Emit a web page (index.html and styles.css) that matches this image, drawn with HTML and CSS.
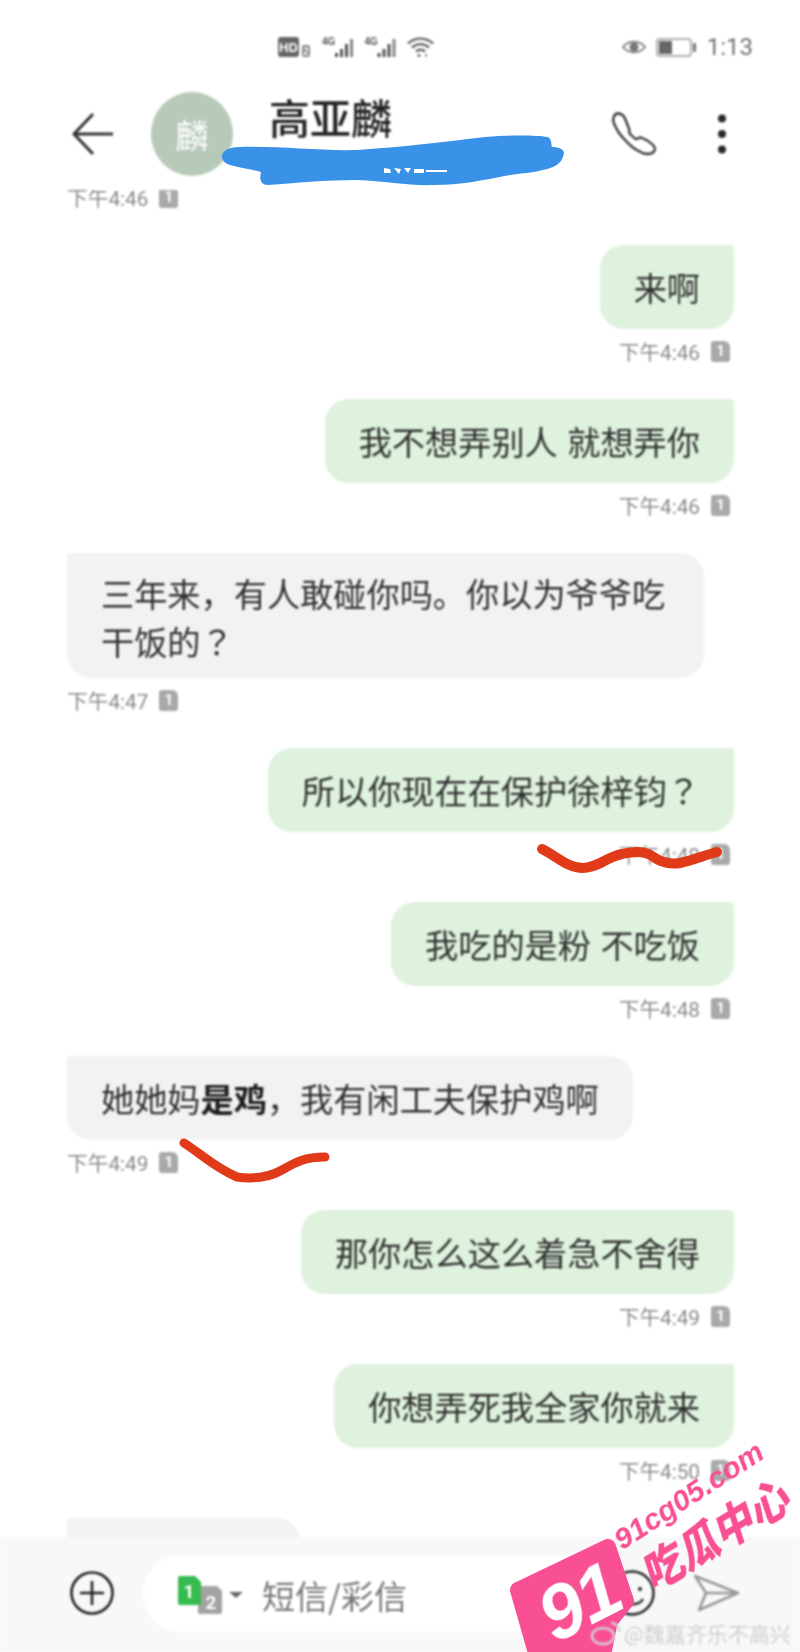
FILE: index.html
```html
<!DOCTYPE html>
<html lang="zh-CN">
<head>
<meta charset="utf-8">
<title>高亚麟</title>
<link rel="stylesheet" href="styles.css">
</head>
<body>
<div class="screen">
  <div class="app">
    <div class="status">
      <div class="status-left">
        <svg class="s-hd" width="32" height="21" viewBox="0 0 32 21"><rect x="0" y="0" width="21" height="20" rx="3" fill="#666"/><text x="10.5" y="15" class="st-hd">HD</text><rect x="24" y="8" width="8" height="12" rx="2" fill="#888"/><text x="28" y="18" class="st-2">2</text></svg>
        <svg width="33" height="22" viewBox="0 0 33 22"><text x="0" y="9" class="st-4g">4G</text><rect x="13" y="17" width="3" height="4" fill="#555"/><rect x="18" y="13" width="3" height="8" fill="#555"/><rect x="23" y="8" width="3" height="13" fill="#555"/><rect x="28" y="3" width="3" height="18" fill="#888"/></svg>
        <svg width="34" height="22" viewBox="0 0 33 22"><text x="0" y="9" class="st-4g">4G</text><rect x="13" y="17" width="3" height="4" fill="#555"/><rect x="18" y="13" width="3" height="8" fill="#555"/><rect x="23" y="8" width="3" height="13" fill="#555"/><rect x="28" y="3" width="3" height="18" fill="#888"/></svg>
        <svg width="27" height="22" viewBox="0 0 27 22" fill="none" stroke="#666" stroke-width="2.4"><path d="M1 7.5C8 1 19 1 26 7.5"/><path d="M5 11.5C10 7 17 7 22 11.5"/><path d="M9 15.5C11.5 13.2 15.5 13.2 18 15.5"/><circle cx="12" cy="19.5" r="1.5" fill="#666" stroke="none"/><circle cx="19" cy="19.5" r="1.2" fill="#888" stroke="none"/></svg>
      </div>
      <div class="status-right">
        <svg width="24" height="16" viewBox="0 0 24 16"><path d="M1 8C6 1 18 1 23 8C18 15 6 15 1 8Z" fill="none" stroke="#888" stroke-width="2"/><circle cx="12" cy="8" r="4.5" fill="#777"/></svg>
        <svg width="41" height="19" viewBox="0 0 41 19"><rect x="1" y="1" width="34" height="17" rx="3" fill="#fff" stroke="#b0b0b0" stroke-width="2"/><rect x="3" y="3" width="13" height="13" fill="#666"/><rect x="37" y="5" width="3" height="9" rx="1" fill="#777"/></svg>
        <span class="clock">1:13</span>
      </div>
    </div>
    <div class="header">
      <svg class="back" width="42" height="44" viewBox="0 0 42 44" fill="none" stroke="#333" stroke-width="3"><path d="M42 22H3M22 2L3 22L22 42"/></svg>
      <div class="avatar">麟</div>
      <div class="name">高亚麟</div>
      <svg class="phone" width="44" height="44" viewBox="0 0 44 44" fill="none" stroke="#333" stroke-width="2.3" stroke-linejoin="round"><path d="M6 1.5C9 1.5 11 3 12.5 5.5C14 9 15.5 13 17 16.5C17.5 19 16.5 21 18.5 22.5L23.5 27C25.5 27.5 27 25 29 25.5C33 27 38 30 41 33C43.5 35.5 43.5 38.5 41 40.5C38 42.5 33 42.5 29.5 40.5C24 38 18.5 34 14.5 29.5C10 25 6 20.5 4 15.5C2 12 0.5 8.5 1.5 6C2 3.5 3.5 1.5 6 1.5Z"/></svg>
      <svg class="more" width="10" height="40" viewBox="0 0 10 40" fill="#2a2a2a"><circle cx="5" cy="4.5" r="4"/><circle cx="5" cy="20" r="4"/><circle cx="5" cy="35.5" r="4"/></svg>
    </div>
    <div class="list">
      <div class="msg recv first"><div class="meta"><span>下午4:46</span><span class="sim">1</span></div></div>
      <div class="msg sent"><div class="bubble">来啊</div><div class="meta"><span>下午4:46</span><span class="sim">1</span></div></div>
      <div class="msg sent"><div class="bubble">我不想弄别人 就想弄你</div><div class="meta"><span>下午4:46</span><span class="sim">1</span></div></div>
      <div class="msg recv"><div class="bubble two-line">三年来，有人敢碰你吗。你以为爷爷吃干饭的<span class="q" lang="zh-Hant">？</span></div><div class="meta"><span>下午4:47</span><span class="sim">1</span></div></div>
      <div class="msg sent"><div class="bubble">所以你现在在保护徐梓钧<span class="q" lang="zh-Hant">？</span></div><div class="meta"><span>下午4:48</span><span class="sim">1</span></div></div>
      <div class="msg sent"><div class="bubble">我吃的是粉 不吃饭</div><div class="meta"><span>下午4:48</span><span class="sim">1</span></div></div>
      <div class="msg recv"><div class="bubble">她她妈<b class="strong">是鸡</b>，我有闲工夫保护鸡啊</div><div class="meta"><span>下午4:49</span><span class="sim">1</span></div></div>
      <div class="msg sent"><div class="bubble">那你怎么这么着急不舍得</div><div class="meta"><span>下午4:49</span><span class="sim">1</span></div></div>
      <div class="msg sent"><div class="bubble">你想弄死我全家你就来</div><div class="meta"><span>下午4:50</span><span class="sim">1</span></div></div>
      <div class="msg recv"><div class="bubble cut"></div></div>
    </div>
    <div class="composer">
      <svg width="44" height="44" viewBox="0 0 44 44" fill="none" stroke="#222" stroke-width="2.6"><circle cx="22" cy="22" r="20.5"/><path d="M22 10V34M10 22H34"/></svg>
      <div class="pill">
        <div class="simpick">
          <svg width="44" height="38" viewBox="0 0 44 38"><path d="M22 10h17l5 5v21a2 2 0 0 1-2 2H22a2 2 0 0 1-2-2V12a2 2 0 0 1 2-2Z" fill="#a3a3a3"/><path d="M2 0h15l6 6v21a2 2 0 0 1-2 2H2a2 2 0 0 1-2-2V2a2 2 0 0 1 2-2Z" fill="#35bb4f"/><text x="11" y="22" class="sim-1">1</text><text x="33" y="33" class="sim-2">2</text></svg>
          <span class="caret"></span>
        </div>
        <span class="placeholder">短信/彩信</span>
      </div>
      <svg class="smile" width="46" height="46" viewBox="0 0 46 46" fill="none" stroke="#222" stroke-width="2.4"><circle cx="23" cy="23" r="21.5"/><circle cx="15" cy="19" r="2" fill="#222" stroke="none"/><circle cx="31" cy="19" r="2" fill="#222" stroke="none"/><path d="M12 29C16 36 30 36 34 29"/></svg>
      <svg class="send" width="46" height="38" viewBox="0 0 46 38" fill="none" stroke="#999" stroke-width="2.6" stroke-linejoin="round"><path d="M1 2L44 19L5 36L12 19L1 2ZM12 19H44"/></svg>
    </div>
  </div>

  <svg class="scribbles" width="800" height="1652" viewBox="0 0 800 1652" fill="none">
    <path fill="#3a92e8" d="M222 155C224 149 232 147 240 147C280 146 320 151 357 150C400 147 445 142 485 137C510 135 535 135 548 137C552 139 551 145 552 147C558 147 564 149 564 153C563 159 560 164 553 167C540 172 525 173 510 175C485 180 460 185 434 185C410 186 385 181 357 180C325 180 295 183 268 185C261 185 259 180 261 172C250 169 240 168 230 165C224 163 221 159 222 155Z"/>
    <path fill="#fff" d="M384 168L390 169L391 173L384 173ZM394 168L401 169L399 174ZM404 168H411L408 173ZM414 169H424V173H414ZM426 170H447V172H426Z"/>
    <path stroke="#e03a18" stroke-width="10" stroke-linecap="round" d="M542 849C556 856 568 868 583 868C598 868 606 857 622 854C634 851 645 851 652 856C660 862 668 865 680 863C694 860 705 855 717 852"/>
    <path stroke="#e03a18" stroke-width="9" stroke-linecap="round" d="M184 1143C200 1153 215 1168 237 1177C252 1179 268 1178 282 1170C296 1162 305 1157 325 1157"/>
  </svg>

  <svg class="badge" width="300" height="212" viewBox="0 0 300 212">
    <path fill="#f94f93" stroke="#f94f93" stroke-width="16" stroke-linejoin="round" d="M18 150L108 107L126 161L110 181L102 220H38Z"/>
  </svg>
  <div class="wm-num">91</div>
  <div class="wm-url">91cg05.com</div>
  <div class="wm-title">吃瓜中心</div>
  <div class="weibo"><svg width="32" height="26" viewBox="0 0 32 26" fill="none" stroke="#d2d2d2" stroke-width="2.4"><ellipse cx="13" cy="16" rx="11" ry="8"/><path d="M21 3C26 3 30 7 29 12"/></svg><span>@魏嘉齐乐不高兴</span></div>
</div>
</body>
</html>
```

FILE: styles.css
```css
* { box-sizing: border-box; }
html, body { margin: 0; padding: 0; background: #fff; }
body { font-family: "Noto Sans CJK SC", "Noto Sans", sans-serif; }
.screen { position: relative; width: 800px; height: 1652px; overflow: hidden; background: #fff; }
.app { width: 800px; height: 1652px; display: flex; flex-direction: column; filter: blur(0.9px); background: #fff; }

.status { height: 70px; flex: none; display: flex; align-items: center; justify-content: space-between; padding: 24px 47px 0 278px; }
.status-left { display: flex; align-items: center; gap: 9px; }
.s-hd { margin-right: 3px; }
.status-right { display: flex; align-items: center; gap: 10px; }
.clock { font-family: "Roboto", sans-serif; font-size: 24px; color: #707070; line-height: 26px; }
.st-hd { font: bold 13px "Liberation Sans", sans-serif; fill: #fff; text-anchor: middle; }
.st-2 { font: bold 10px "Liberation Sans", sans-serif; fill: #fff; text-anchor: middle; }
.st-4g { font: bold 10px "Liberation Sans", sans-serif; fill: #555; }

.header { height: 120px; flex: none; display: flex; align-items: center; padding: 8px 73px 0 71px; }
.back { flex: none; margin-right: 38px; }
.avatar { width: 82px; height: 84px; flex: none; border-radius: 50%; background: #b7cab9; color: #fff; font-size: 33px; display: flex; align-items: center; justify-content: center; margin-right: 36px; }
.name { align-self: flex-start; margin-top: 13px; font-size: 41px; font-weight: 500; line-height: 50px; color: #222; }
.phone { flex: none; margin-left: auto; margin-right: 61px; }
.more { flex: none; }

.list { flex: 1; min-height: 0; overflow: hidden; padding: 0 66px 0 67px; }
.msg { display: flex; flex-direction: column; margin-bottom: 36px; }
.msg.first { margin-top: -5px; }
.sent { align-items: flex-end; }
.recv { align-items: flex-start; }
.bubble { max-width: 637px; padding: 18px 34px; font-size: 33.2px; line-height: 48px; color: #303030; word-spacing: 2px; }
.sent .bubble { background: #def2dd; border-radius: 24px 4px 24px 24px; }
.recv .bubble { background: #f2f2f3; border-radius: 4px 24px 24px 24px; }
.bubble.two-line { padding-top: 16px; padding-bottom: 13px; }
.q { font-family: "Noto Sans CJK TC", sans-serif; }
.strong { font-weight: 700; color: #1c1c1c; }
.bubble.cut { width: 233px; height: 84px; }
.meta { display: flex; align-items: center; gap: 11px; height: 24px; margin-top: 10px; font-family: "Roboto", "Noto Sans CJK SC", sans-serif; font-size: 20.7px; color: #8a8a8a; }
.sent .meta { margin-right: 4px; }
.recv .meta { margin-left: 0; }
.first .meta { margin-top: 0; }
.sim { width: 19px; height: 21px; border-radius: 3px 6px 3px 3px; background: #a9a9a9; color: #fff; font-size: 15px; font-weight: 700; line-height: 21px; text-align: center; }

.composer { height: 115px; flex: none; display: flex; align-items: flex-start; padding: 18px 60px 0 70px; background: #f8f8f8; }
.composer > svg { margin-top: 16px; flex: none; }
.pill { width: 458px; height: 77px; margin-left: 29px; background: #fff; border-radius: 38px; display: flex; align-items: center; padding: 2px 0 0 35px; }
.simpick { display: flex; align-items: center; gap: 7px; }
.caret { width: 0; height: 0; border-left: 7px solid transparent; border-right: 7px solid transparent; border-top: 6px solid #666; }
.placeholder { margin-left: 19px; font-size: 33px; color: #777; line-height: 44px; }
.sim-1 { font: bold 19px "Roboto", sans-serif; fill: #fff; text-anchor: middle; }
.sim-2 { font: bold 19px "Roboto", sans-serif; fill: #fff; text-anchor: middle; }
.composer .smile { margin-left: 10px; margin-top: 15px; }
.composer .send { margin-left: 39px; margin-top: 19px; }

.scribbles { position: absolute; left: 0; top: 0; filter: blur(0.6px); pointer-events: none; }
.weibo { position: absolute; left: 590px; top: 1619px; display: flex; align-items: center; gap: 2px; font-size: 21px; line-height: 28px; color: #cfcfcf; filter: blur(0.9px); white-space: nowrap; }
.badge { position: absolute; left: 500px; top: 1440px; filter: blur(0.4px); }
.wm-num, .wm-url, .wm-title { position: absolute; white-space: nowrap; filter: blur(0.3px); }
.wm-num { left: 538px; top: 1564px; width: 82px; text-align: center; color: #fff; font: italic bold 76px/1 "Liberation Sans", sans-serif; letter-spacing: -2px; transform: rotate(-27deg); }
.wm-url { left: 603px; top: 1481px; width: 170px; text-align: center; color: #f94f93; font: italic bold 30px/1 "Liberation Sans", sans-serif; transform: rotate(-33deg); }
.wm-title { left: 627px; top: 1513px; width: 172px; text-align: center; color: #f94f93; font: italic 900 41px/1 "Noto Sans CJK SC", sans-serif; transform: rotate(-31deg) scaleY(1.1); }
```
